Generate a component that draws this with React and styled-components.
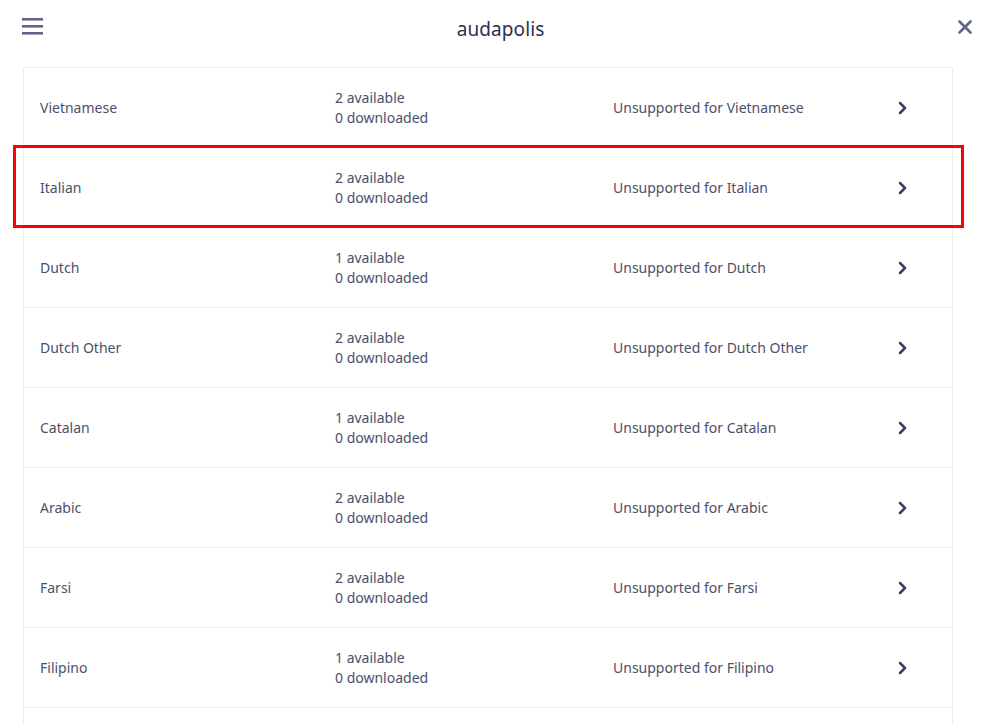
import React from 'react';
import styled, { createGlobalStyle } from 'styled-components';

const GlobalStyle = createGlobalStyle`
  body {
    margin: 0;
    background: #fff;
    font-family: "Noto Sans", "Open Sans", sans-serif;
    overflow: hidden;
  }
`;

const Page = styled.div`
  width: 984px;
  height: 724px;
  overflow: hidden;
  background: #fff;
`;

// top bar: menu, app name, close
const Header = styled.header`
  height: 67px;
  display: flex;
  align-items: flex-start;
  justify-content: space-between;
  padding: 16px 12px 0 22px;
  box-sizing: border-box;
`;

const IconButton = styled.button`
  background: none;
  border: none;
  padding: 0;
  display: flex;
  align-items: center;
  color: #62658a;
  cursor: pointer;
  margin-top: ${(p) => p.offset || 0}px;
`;

const Title = styled.h1`
  margin: 0;
  font-size: 19px;
  line-height: 26px;
  font-weight: 400;
  color: #2c3150;
  letter-spacing: 0.1px;
`;

const List = styled.div`
  margin: 0 31px 0 23px;
  border: 1px solid #ebebf0;
  border-bottom: none;
`;

const Row = styled.div`
  position: relative;
  display: grid;
  grid-template-columns: 295px 278px 285px 1fr;
  align-items: center;
  height: 79px;
  border-bottom: 1px solid #ebebf0;
  font-size: 14px;
  line-height: 20px;
  color: #4b4f6b;
`;

const Cell = styled.div`
  padding-left: 16px;
`;

const ChevronCell = styled(Cell)`
  display: flex;
  align-items: center;
  color: #3b3e5a;
`;

// red annotation frame drawn over the selected row
const Highlight = styled.div`
  position: absolute;
  top: -3px;
  left: -11px;
  right: -12px;
  bottom: -1px;
  border: 3px solid #ff0000;
  pointer-events: none;
`;

const languages = [
  { name: 'Vietnamese', available: 2 },
  { name: 'Italian', available: 2, highlight: true },
  { name: 'Dutch', available: 1 },
  { name: 'Dutch Other', available: 2 },
  { name: 'Catalan', available: 1 },
  { name: 'Arabic', available: 2 },
  { name: 'Farsi', available: 2 },
  { name: 'Filipino', available: 1 },
];

const MenuIcon = () => (
  <svg width="21" height="17" viewBox="0 0 21 17">
    <rect x="0" y="0" width="21" height="2.6" fill="currentColor" />
    <rect x="0" y="7" width="21" height="2.6" fill="currentColor" />
    <rect x="0" y="14" width="21" height="2.6" fill="currentColor" />
  </svg>
);

const CloseIcon = () => (
  <svg width="14" height="14" viewBox="0 0 14 14">
    <path d="M1.5 1.5 L12.5 12.5 M12.5 1.5 L1.5 12.5" stroke="currentColor" strokeWidth="2.6" strokeLinecap="round" />
  </svg>
);

const Chevron = () => (
  <svg width="9" height="14" viewBox="0 0 9 14">
    <path d="M2 2 L7 7 L2 12" stroke="currentColor" strokeWidth="2.5" fill="none" strokeLinecap="round" strokeLinejoin="round" />
  </svg>
);

const App = () => {
  return (
    <Page>
      <GlobalStyle />
      <Header>
        <IconButton offset={2}>
          <MenuIcon />
        </IconButton>
        <Title>audapolis</Title>
        <IconButton offset={4}>
          <CloseIcon />
        </IconButton>
      </Header>
      <List>
        {languages.map((lang) => (
          <Row key={lang.name}>
            <Cell>{lang.name}</Cell>
            <Cell>
              {lang.available} available
              <br />0 downloaded
            </Cell>
            <Cell>Unsupported for {lang.name}</Cell>
            <ChevronCell>
              <Chevron />
            </ChevronCell>
            {lang.highlight && <Highlight />}
          </Row>
        ))}
        {/* next row, scrolled below the window */}
        <Row />
      </List>
    </Page>
  );
};

export default App;
